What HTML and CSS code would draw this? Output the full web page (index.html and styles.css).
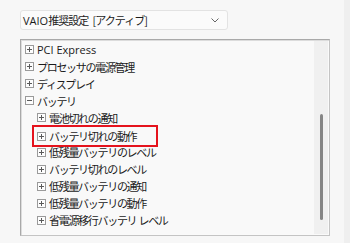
FILE: index.html
```html
<!DOCTYPE html>
<html lang="ja">
<head>
<meta charset="utf-8">
<link rel="stylesheet" href="styles.css">
</head>
<body>
<div class="page">
  <div class="main">
    <div class="select">
      <span class="select-text"><span class="lat">VAIO</span>推奨設定 [アクティブ]</span>
      <svg class="chev" width="8" height="5" viewBox="0 0 8 5"><path d="M0.5 0.5 L4 4 L7.5 0.5" fill="none" stroke="#666" stroke-width="1"/></svg>
    </div>
    <div class="tree">
      <ul class="list">
        <li class="row"><span class="pm plus"></span><span class="lat">PCI Express</span></li>
        <li class="row"><span class="pm plus"></span>プロセッサの電源管理</li>
        <li class="row"><span class="pm plus"></span>ディスプレイ</li>
        <li class="row"><span class="pm minus"></span>バッテリ</li>
        <li class="row sub"><span class="pm plus"></span>電池切れの通知</li>
        <li class="row sub"><span class="hl"><span class="pm plus"></span>バッテリ切れの動作</span></li>
        <li class="row sub"><span class="pm plus"></span>低残量バッテリのレベル</li>
        <li class="row sub"><span class="pm plus"></span>バッテリ切れのレベル</li>
        <li class="row sub"><span class="pm plus"></span>低残量バッテリの通知</li>
        <li class="row sub"><span class="pm plus"></span>低残量バッテリの動作</li>
        <li class="row sub"><span class="pm plus"></span>省電源移行バッテリ レベル</li>
      </ul>
      <div class="scroll"><div class="thumb"></div></div>
    </div>
  </div>
  <div class="strip"></div>
</div>
</body>
</html>
```

FILE: styles.css
```css
html, body {
  margin: 0;
  padding: 0;
  background: #f7f7f7;
}
.page {
  display: flex;
  width: 350px;
  height: 243px;
  font-family: "Noto Sans CJK JP", "Noto Sans", sans-serif;
  color: #1b1b1b;
}
.main {
  flex: 1;
  padding: 10px 0 0 20px;
}
.strip {
  width: 6px;
  background: #efefef;
}
.select {
  box-sizing: border-box;
  width: 208px;
  height: 20px;
  background: #fbfbfb;
  border: 1px solid #e3e3e3;
  border-radius: 3px;
  display: flex;
  align-items: center;
  justify-content: space-between;
  padding: 0 8px 0 2px;
}
.select-text {
  font-size: 11px;
  letter-spacing: -1px;
  word-spacing: 3px;
  line-height: 1;
}
.lat {
  font-family: "Open Sans", "Noto Sans", sans-serif;
  letter-spacing: 0;
  word-spacing: 0;
}
.tree {
  box-sizing: border-box;
  margin-top: 9px;
  width: 310px;
  height: 197px;
  border: 1px solid #a9a9a9;
  border-right-color: #c4c4c4;
  border-bottom-color: #c4c4c4;
  box-shadow: inset 1px 1px 0 #dcdcdc, inset -1px -1px 0 #fafafa;
  background: #f9f9f9;
  display: flex;
  overflow: hidden;
}
.list {
  list-style: none;
  margin: 0;
  padding: 1px 0 0 4px;
  flex: 1;
}
.row {
  height: 17.1px;
  display: flex;
  align-items: center;
  font-size: 11px;
  letter-spacing: -1.3px;
  word-spacing: 1px;
  white-space: pre;
}
.row .lat {
  font-size: 11px;
}
.row.sub {
  padding-left: 12px;
}
.hl {
  display: flex;
  align-items: center;
  box-sizing: border-box;
  height: 22px;
  margin-left: -5px;
  padding-left: 5px;
  width: 126px;
  border: 2px solid #e5131d;
  margin-top: 2px;
}
.hl .pm {
  margin-left: -2px;
}
.pm {
  position: relative;
  box-sizing: border-box;
  width: 9px;
  height: 9px;
  border: 1px solid #9a9a9a;
  margin-right: 3px;
  flex: none;
  background: #fdfdfd;
}
.pm::before {
  content: "";
  position: absolute;
  left: 1px;
  top: 3px;
  width: 5px;
  height: 1px;
  background: #5a5a5a;
}
.plus::after {
  content: "";
  position: absolute;
  left: 3px;
  top: 1px;
  width: 1px;
  height: 5px;
  background: #5a5a5a;
}
.scroll {
  width: 14px;
  background: #f0f0f0;
  margin: 1px 1px 1px 0;
  display: flex;
  justify-content: center;
  padding-top: 73px;
  box-sizing: border-box;
}
.thumb {
  width: 3px;
  height: 106px;
  border-radius: 2px;
  background: #858585;
  margin-left: 1px;
}
```
